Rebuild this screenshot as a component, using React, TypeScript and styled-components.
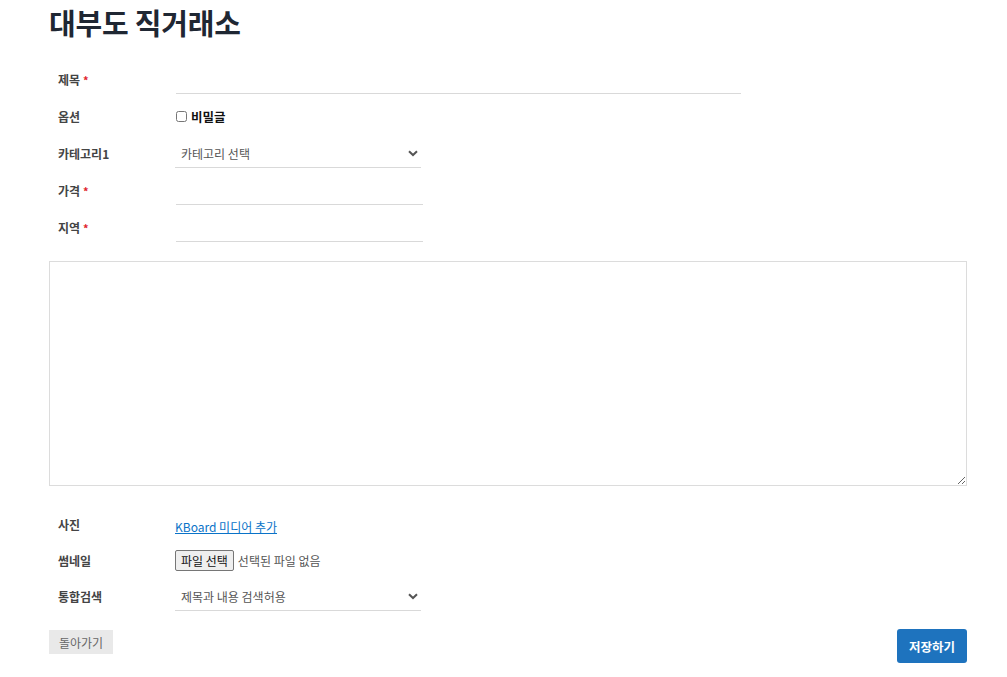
import React from "react";
import styled, { createGlobalStyle } from "styled-components";

const GlobalStyle = createGlobalStyle`
  html, body {
    margin: 0;
    padding: 0;
    background: #fff;
  }
  body {
    font-family: "Noto Sans CJK KR", "Noto Sans", "Liberation Sans", sans-serif;
    color: #333;
  }
`;

const Page = styled.div`
  width: 918px;
  padding: 0 0 14px 49px;
`;

const Title = styled.h1`
  margin: 0;
  padding-top: 4px;
  height: 61px;
  font-size: 29px;
  font-weight: 700;
  line-height: 36px;
  color: #1f2733;
  letter-spacing: -0.2px;
`;

const Fields = styled.div<{ $gap: number }>`
  display: flex;
  flex-direction: column;
  gap: ${(p) => p.$gap}px;
`;

const Row = styled.div`
  display: grid;
  grid-template-columns: 126px 1fr;
  align-items: center;
  height: 29px;
`;

const Label = styled.label`
  padding-left: 9px;
  font-size: 12px;
  font-weight: 700;
  color: #444;
`;

const Required = styled.span`
  color: #e0242c;
  font-size: 11px;
  margin-left: 3px;
`;

const TextInput = styled.input<{ $width: number }>`
  box-sizing: border-box;
  width: ${(p) => p.$width}px;
  height: 29px;
  margin-left: 1px;
  border: none;
  border-bottom: 1px solid #d9d9d9;
  background: transparent;
  font: inherit;
  font-size: 12px;
  outline: none;
`;

const CheckLabel = styled.label`
  display: flex;
  align-items: center;
  gap: 4px;
  font-size: 12.5px;
  font-weight: 700;
  color: #111;
`;

const Checkbox = styled.input`
  width: 11px;
  height: 11px;
  margin: 0 0 0 1px;
`;

const SelectWrap = styled.div`
  position: relative;
  width: 246px;
`;

const Select = styled.select`
  box-sizing: border-box;
  width: 100%;
  height: 29px;
  padding: 0 24px 0 6px;
  appearance: none;
  border: none;
  border-bottom: 1px solid #d9d9d9;
  border-radius: 0;
  background: transparent;
  font: inherit;
  font-size: 12px;
  color: #555;
  outline: none;
`;

const Chevron = styled.svg`
  position: absolute;
  right: 3px;
  top: 11px;
  pointer-events: none;
`;

const Editor = styled.textarea`
  box-sizing: border-box;
  display: block;
  width: 918px;
  height: 225px;
  margin: 19px 0 24px;
  border: 1px solid #dcdcdc;
  resize: vertical;
  outline: none;
`;

const MediaLink = styled.a`
  font-size: 12px;
  color: #0a73c8;
  text-decoration: underline;
  cursor: pointer;
`;

const FileLine = styled.div`
  display: flex;
  align-items: center;
  gap: 4px;
  font-size: 12px;
  color: #555;
`;

const FileButton = styled.button`
  box-sizing: border-box;
  height: 21px;
  padding: 0 5px;
  border: 1px solid #767676;
  border-radius: 2px;
  background: #efefef;
  font: inherit;
  font-size: 12px;
  color: #111;
`;

const Actions = styled.div`
  display: flex;
  justify-content: space-between;
  align-items: flex-start;
  margin-top: 18px;
`;

const BackButton = styled.button`
  height: 24px;
  padding: 0 10px;
  border: none;
  background: #e9e9e9;
  font: inherit;
  font-size: 12px;
  color: #666;
  margin-top: 1px;
`;

const SaveButton = styled.button`
  height: 34px;
  padding: 0 12px;
  border: none;
  border-radius: 3px;
  background: #1e73be;
  font: inherit;
  font-size: 12.5px;
  font-weight: 700;
  color: #fff;
`;

const ChevronIcon = () => (
  <Chevron width="10" height="7" viewBox="0 0 10 7">
    <path d="M1 1.2 L5 5 L9 1.2" fill="none" stroke="#555" strokeWidth="2" />
  </Chevron>
);

const App = () => {
  return (
    <Page>
      <GlobalStyle />
      <Title>대부도 직거래소</Title>
      <Fields $gap={8}>
        <Row>
          <Label>
            제목<Required>*</Required>
          </Label>
          <TextInput $width={565} />
        </Row>
        <Row>
          <Label>옵션</Label>
          <CheckLabel>
            <Checkbox type="checkbox" />
            비밀글
          </CheckLabel>
        </Row>
        <Row>
          <Label>카테고리1</Label>
          <SelectWrap>
            <Select defaultValue="">
              <option value="">카테고리 선택</option>
            </Select>
            <ChevronIcon />
          </SelectWrap>
        </Row>
        <Row>
          <Label>
            가격<Required>*</Required>
          </Label>
          <TextInput $width={247} />
        </Row>
        <Row>
          <Label>
            지역<Required>*</Required>
          </Label>
          <TextInput $width={247} />
        </Row>
      </Fields>
      <Editor />
      <Fields $gap={7}>
        <Row>
          <Label>사진</Label>
          <div>
            <MediaLink>KBoard 미디어 추가</MediaLink>
          </div>
        </Row>
        <Row>
          <Label>썸네일</Label>
          <FileLine>
            <FileButton>파일 선택</FileButton>
            선택된 파일 없음
          </FileLine>
        </Row>
        <Row>
          <Label>통합검색</Label>
          <SelectWrap>
            <Select defaultValue="1">
              <option value="1">제목과 내용 검색허용</option>
            </Select>
            <ChevronIcon />
          </SelectWrap>
        </Row>
      </Fields>
      <Actions>
        <BackButton>돌아가기</BackButton>
        <SaveButton>저장하기</SaveButton>
      </Actions>
    </Page>
  );
};

export default App;
